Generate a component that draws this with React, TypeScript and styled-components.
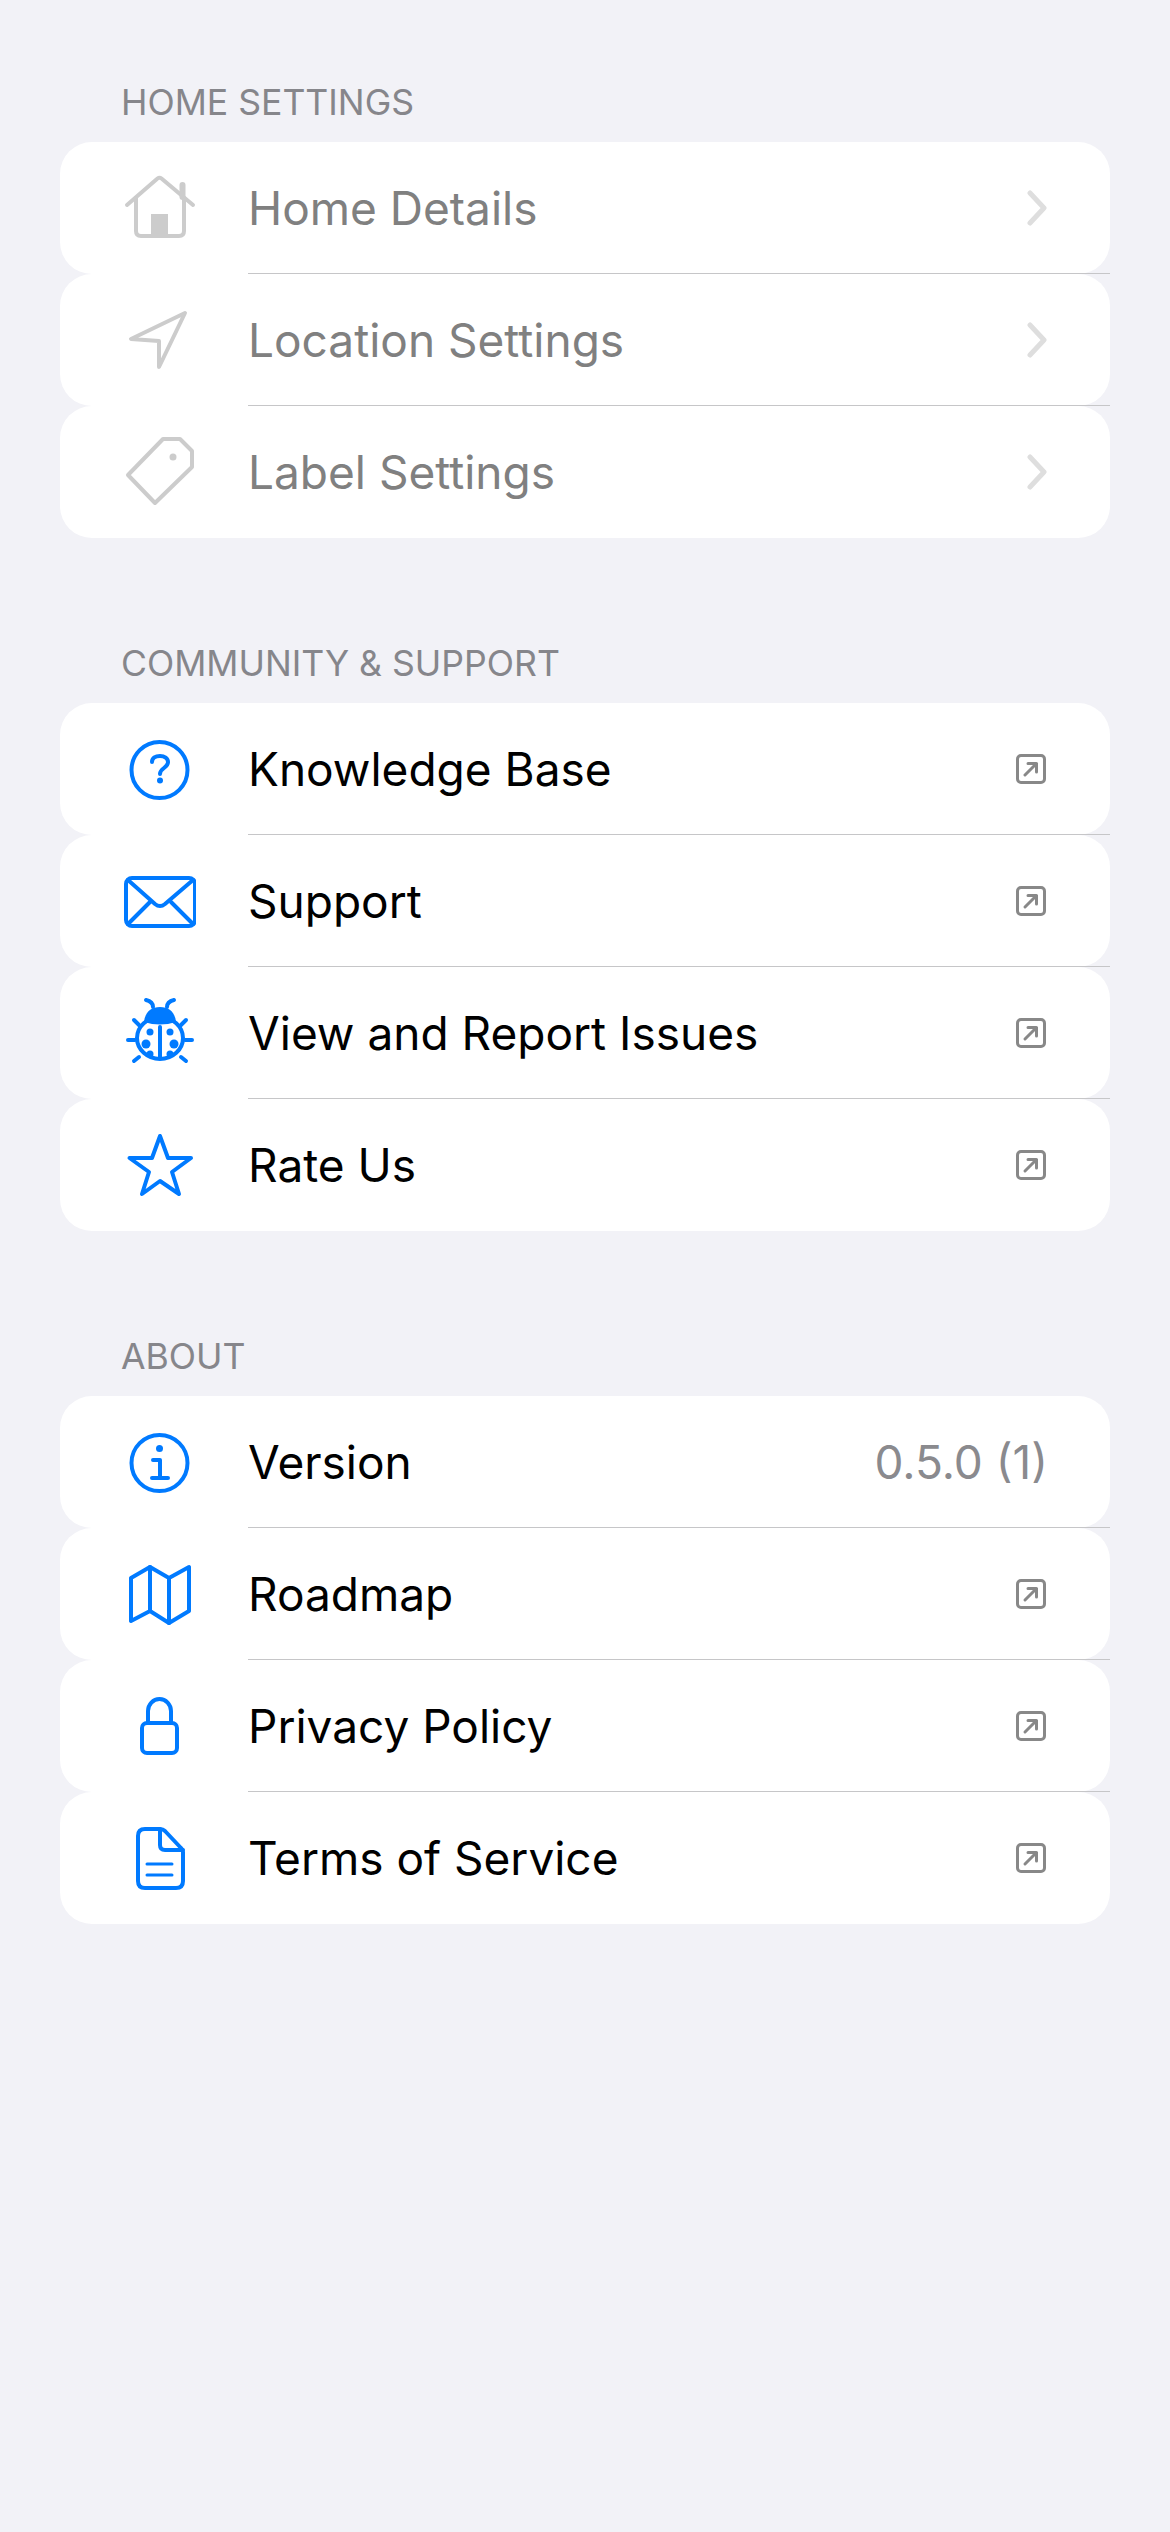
import React from "react";
import styled, { createGlobalStyle } from "styled-components";

const GlobalStyle = createGlobalStyle`
  html, body {
    margin: 0;
    padding: 0;
    background: #f2f2f7;
  }
  body {
    font-family: Inter, "Liberation Sans", sans-serif;
    -webkit-font-smoothing: antialiased;
  }
`;

const Page = styled.div`
  box-sizing: border-box;
  height: 2532px;
  padding: 82px 60px 0;
  background: #f2f2f7;
  display: flex;
  flex-direction: column;
  gap: 105px;
  overflow: hidden;
`;

const SectionBlock = styled.section`
  display: flex;
  flex-direction: column;
`;

const SectionTitle = styled.h2`
  margin: 1px 0 19px;
  padding-left: 61px;
  height: 40px;
  font-size: 35.6px;
  line-height: 40px;
  font-weight: 400;
  color: #86868b;
`;

const Row = styled.div`
  display: flex;
  height: 132px;
  background: #fff;
  border-radius: 32px;
`;

const IconCell = styled.div<{ $muted?: boolean }>`
  width: 188px;
  flex: none;
  display: flex;
  align-items: center;
  padding-left: 64px;
  box-sizing: border-box;
  color: ${(p) => (p.$muted ? "#cccccc" : "#007aff")};
`;

const RowBody = styled.div<{ $last?: boolean }>`
  flex: 1;
  display: flex;
  align-items: center;
  justify-content: space-between;
  padding-right: 64px;
  border-bottom: 1px solid ${(p) => (p.$last ? "transparent" : "#c6c6c8")};
`;

const RowLabel = styled.span<{ $muted?: boolean }>`
  font-size: 46px;
  line-height: 58px;
  color: ${(p) => (p.$muted ? "#808080" : "#000")};
`;

const RowValue = styled.span`
  font-size: 46px;
  line-height: 58px;
  margin-right: -2px;
  color: #8a8a8e;
`;

const Glyph = styled.svg`
  display: block;
  fill: none;
  stroke: currentColor;
  stroke-width: 4;
  stroke-linecap: round;
  stroke-linejoin: round;
`;

const Chevron = styled.svg`
  display: block;
  width: 20px;
  height: 36px;
  margin-right: -1px;
  fill: none;
  stroke: #dedede;
  stroke-width: 5;
  stroke-linecap: round;
  stroke-linejoin: round;
`;

const External = styled.svg`
  display: block;
  width: 30px;
  height: 30px;
  fill: none;
  stroke: #888888;
  stroke-width: 3;
  stroke-linecap: round;
  stroke-linejoin: round;
`;

const Icon: React.FC<{ children: React.ReactNode }> = ({ children }) => (
  <Glyph width="72" height="72" viewBox="0 0 72 72">
    {children}
  </Glyph>
);

const HomeIcon = () => (
  <Icon>
    <path d="M3 33 33.500 6.500Q35.500 5 37.500 6.500L69 33" />
    <path d="M12 26V59Q12 64 17 64H55Q60 64 60 59V26" />
    <path d="M58.500 13V25" strokeWidth="6" />
    <rect x="27" y="42" width="17" height="23" fill="currentColor" stroke="none" />
  </Icon>
);

const LocationIcon = () => (
  <Icon>
    <path d="M61 9 7 35 35 37 35 63Z" />
  </Icon>
);

const TagIcon = () => (
  <Icon>
    <path d="M39 3H56L68 15V31L31 67 4 39Z" />
    <circle cx="49" cy="21" r="3.500" fill="currentColor" stroke="none" />
  </Icon>
);

const QuestionIcon = () => (
  <Icon>
    <circle cx="35.500" cy="37" r="28" />
    <path d="M28 29C28 25 31.500 23 36 23C40.500 23 44 25.500 44 29C44 32 42 33.500 40 35C37.500 36.800 36 38 36 41" />
    <circle cx="36" cy="47.500" r="3" fill="currentColor" stroke="none" />
  </Icon>
);

const MailIcon = () => (
  <Icon>
    <rect x="2" y="13" width="69" height="48" rx="6" />
    <path d="M4 15 31 39Q36 43 41 39L69 15" />
    <path d="M4 59 26 37M69 59 47 37" />
  </Icon>
);

const spots: [number, number, number][] = [
  [26, 35, 3.5],
  [22, 47, 4.5],
  [26, 57, 3.5],
  [46, 35, 3.5],
  [50, 47, 4.5],
  [46, 57, 3.5],
];

const BugIcon = () => (
  <Icon>
    <ellipse cx="36" cy="41" rx="23" ry="21" />
    <path d="M36 30V61" />
    <path
      d="M20 25C21 15 27 10 36 10C45 10 51 15 52 25Q36 30 20 25Z"
      fill="currentColor"
      stroke="none"
    />
    <path d="M29 10C29 6 26 4 22 3M43 10C43 6 46 4 50 3" />
    <path d="M10 23 15 28M4 43H11M10 64 15 60M62 23 57 28M68 43H61M62 64 57 60" />
    {spots.map(([cx, cy, r]) => (
      <circle key={`${cx}-${cy}`} cx={cx} cy={cy} r={r} fill="currentColor" stroke="none" />
    ))}
  </Icon>
);

const StarIcon = () => (
  <Icon>
    <path d="M36 7 44 29H67L48 43 55 65 36 52 18 65 25 43 5.500 29H28Z" />
  </Icon>
);

const InfoIcon = () => (
  <Icon>
    <circle cx="35.500" cy="37" r="28" />
    <circle cx="35.500" cy="22.500" r="3.500" fill="currentColor" stroke="none" />
    <path d="M29 34H36V52M28 52H44" />
  </Icon>
);

const MapIcon = () => (
  <Icon>
    <path d="M7 20 26 9 45 20 65 9V53L45 65 26 53 7 63Z" />
    <path d="M26 9V53M45 20V65" />
  </Icon>
);

const LockIcon = () => (
  <Icon>
    <rect x="18" y="33" width="35" height="30" rx="5" />
    <path d="M24 33V21A11.500 12 0 0 1 47 21V33" />
  </Icon>
);

const DocIcon = () => (
  <Icon>
    <path d="M21 7H36Q39 7 41 9L57 26Q59 28 59 30V59Q59 66 52 66H21Q14 66 14 59V14Q14 7 21 7Z" />
    <path d="M36 7V23Q36 28 41 28H59" />
    <path d="M23 42H48M23 53H48" strokeWidth="3" />
  </Icon>
);

const ChevronIcon = () => (
  <Chevron viewBox="0 0 20 36">
    <path d="M3 3 17 18 3 33" />
  </Chevron>
);

const ExternalIcon = () => (
  <External viewBox="0 0 30 30">
    <rect x="1.500" y="1.500" width="27" height="27" rx="3.500" />
    <path d="M9 21 20.500 9.500M12 9.500H20.500V18" />
  </External>
);

type Trailing = "chevron" | "external" | string;

interface RowData {
  label: string;
  icon: React.ReactNode;
  trailing: Trailing;
}

interface SectionData {
  title: string;
  muted?: boolean;
  rows: RowData[];
}

const sections: SectionData[] = [
  {
    title: "HOME SETTINGS",
    muted: true,
    rows: [
      { label: "Home Details", icon: <HomeIcon />, trailing: "chevron" },
      { label: "Location Settings", icon: <LocationIcon />, trailing: "chevron" },
      { label: "Label Settings", icon: <TagIcon />, trailing: "chevron" },
    ],
  },
  {
    title: "COMMUNITY & SUPPORT",
    rows: [
      { label: "Knowledge Base", icon: <QuestionIcon />, trailing: "external" },
      { label: "Support", icon: <MailIcon />, trailing: "external" },
      { label: "View and Report Issues", icon: <BugIcon />, trailing: "external" },
      { label: "Rate Us", icon: <StarIcon />, trailing: "external" },
    ],
  },
  {
    title: "ABOUT",
    rows: [
      { label: "Version", icon: <InfoIcon />, trailing: "0.5.0 (1)" },
      { label: "Roadmap", icon: <MapIcon />, trailing: "external" },
      { label: "Privacy Policy", icon: <LockIcon />, trailing: "external" },
      { label: "Terms of Service", icon: <DocIcon />, trailing: "external" },
    ],
  },
];

const renderTrailing = (trailing: Trailing) => {
  if (trailing === "chevron") return <ChevronIcon />;
  if (trailing === "external") return <ExternalIcon />;
  return <RowValue>{trailing}</RowValue>;
};

const App: React.FC = () => (
  <>
    <GlobalStyle />
    <Page>
      {sections.map((section) => (
        <SectionBlock key={section.title}>
          <SectionTitle>{section.title}</SectionTitle>
          {section.rows.map((row, i) => (
            <Row key={row.label}>
              <IconCell $muted={section.muted}>{row.icon}</IconCell>
              <RowBody $last={i === section.rows.length - 1}>
                <RowLabel $muted={section.muted}>{row.label}</RowLabel>
                {renderTrailing(row.trailing)}
              </RowBody>
            </Row>
          ))}
        </SectionBlock>
      ))}
    </Page>
  </>
);

export default App;
